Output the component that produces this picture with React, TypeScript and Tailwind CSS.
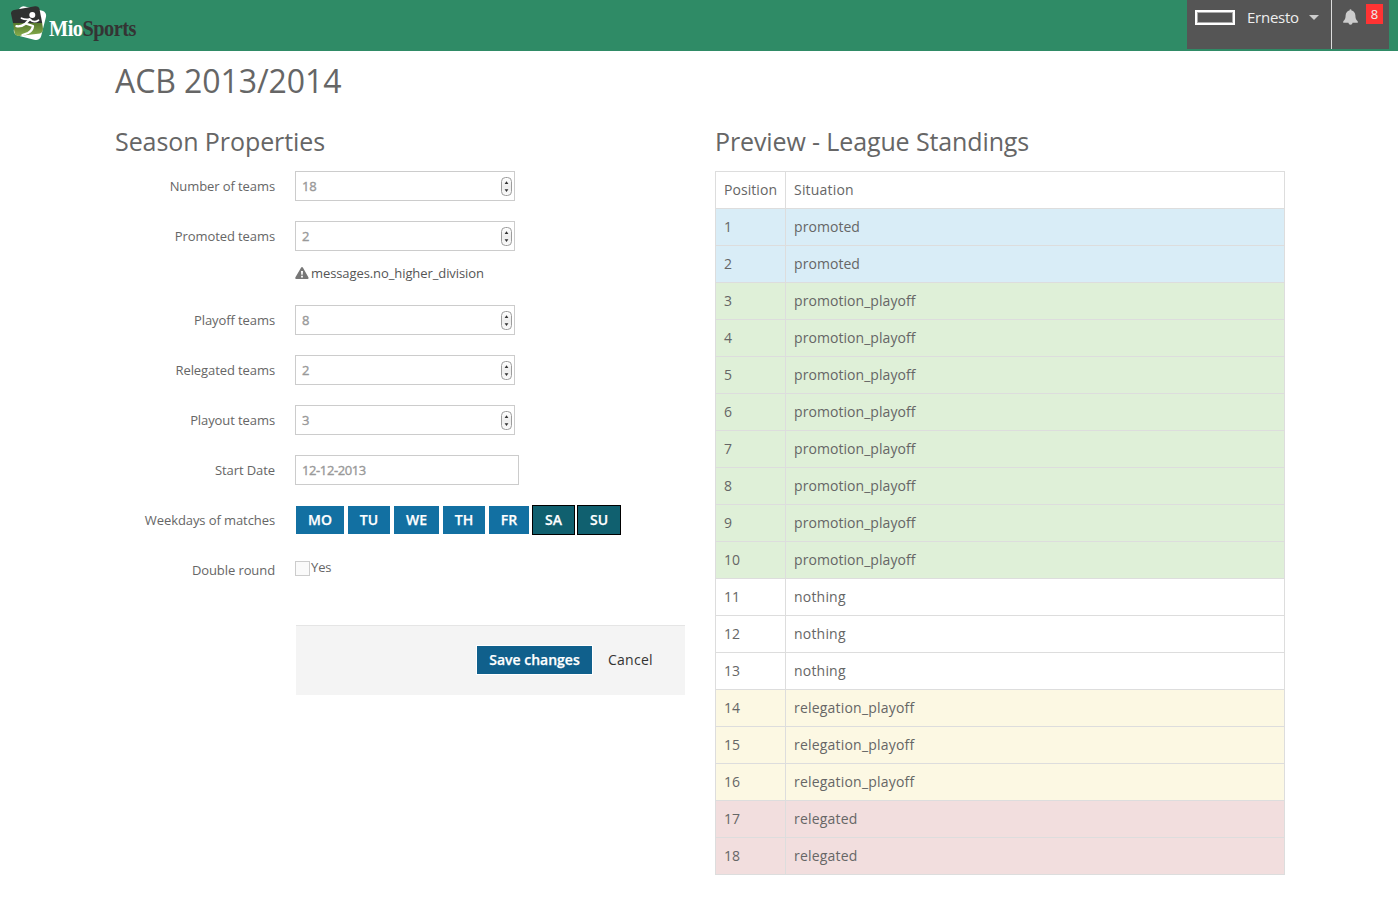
import React from "react";

const fields = [
  { label: "Number of teams", value: "18" },
  { label: "Promoted teams", value: "2", note: "messages.no_higher_division" },
  { label: "Playoff teams", value: "8" },
  { label: "Relegated teams", value: "2" },
  { label: "Playout teams", value: "3" },
];

const days = [
  { name: "MO", cls: "w-[50px] border-white bg-[#1270a2]" },
  { name: "TU", cls: "w-[44px] border-white bg-[#1270a2]" },
  { name: "WE", cls: "w-[47px] border-white bg-[#1270a2]" },
  { name: "TH", cls: "w-[44px] border-white bg-[#1270a2]" },
  { name: "FR", cls: "w-[42px] border-white bg-[#1270a2]" },
  { name: "SA", cls: "w-[43px] border-black bg-[#10606f]" },
  { name: "SU", cls: "w-[44px] border-black bg-[#10606f]" },
];

const situation = (n: number) => {
  if (n <= 2) return { text: "promoted", cls: "bg-[#d9edf7]" };
  if (n <= 10) return { text: "promotion_playoff", cls: "bg-[#dff0d8]" };
  if (n <= 13) return { text: "nothing", cls: "bg-white" };
  if (n <= 16) return { text: "relegation_playoff", cls: "bg-[#fcf8e3]" };
  return { text: "relegated", cls: "bg-[#f2dede]" };
};

function Stepper() {
  return (
    <svg width="13" height="21" viewBox="0 0 13 21" className="shrink-0">
      <defs>
        <linearGradient id="knob" x1="0" y1="0" x2="0" y2="1">
          <stop offset="0" stopColor="#fff" />
          <stop offset="0.5" stopColor="#eee" />
          <stop offset="1" stopColor="#fafafa" />
        </linearGradient>
      </defs>
      <rect x="1.5" y="1.5" width="10" height="18" rx="4" fill="url(#knob)" stroke="#9c9c9c" />
      <path d="M6.5 5.2 8.4 8H4.6ZM6.5 16 8.4 13.2H4.6Z" fill="#333" />
    </svg>
  );
}

function Row({ label, children }: { label: string; children: React.ReactNode }) {
  return (
    <div className="mb-5 flex">
      <div className="w-40 pt-[5px] text-right text-[13px] leading-5 tracking-[-0.09px]">{label}</div>
      <div className="ml-5">{children}</div>
    </div>
  );
}

function Logo() {
  return (
    <div className="flex h-[51px] items-start pl-[10px] pt-[5px]">
      <svg width="37" height="37" viewBox="0 0 37 37">
        <defs>
          <linearGradient id="turf" x1="0" y1="0" x2="0" y2="1">
            <stop offset="0" stopColor="#55782c" />
            <stop offset="1" stopColor="#86ac4c" />
          </linearGradient>
        </defs>
        <rect x="6" y="3.2" width="28" height="30" rx="5" fill="#fff" transform="rotate(14 20 18)" />
        <path d="M1 8.5Q1 5.5 4 4.9L25 1.2Q28.6.8 29.5 4L32.2 18H3Z" fill="#2f3130" />
        <path d="M3 18H32.2L33 24Q33 27.5 30 28.5L9 31Q5.2 31 4.6 28Z" fill="url(#turf)" />
        <circle cx="22.3" cy="10" r="3" fill="#fff" />
        <path d="M11.5 13.2Q15.5 15 19.5 14L22 16Q25 17.5 28.5 15.2" fill="none" stroke="#fff" strokeWidth="1.8" strokeLinecap="round" strokeLinejoin="round" />
        <path d="M19.5 14.5L15.5 18.5L23 21Q22.5 25.5 18 28L12.5 30M15 19Q11 22 6.5 21.2" fill="none" stroke="#fff" strokeWidth="2.3" strokeLinecap="round" strokeLinejoin="round" />
      </svg>
      <div className="ml-[2px] mt-[10px] origin-left scale-x-[0.885] whitespace-nowrap font-['Liberation_Serif',serif] text-[23px] font-bold leading-[28px] tracking-[-0.6px] text-[#343434]">
        <span className="text-white">Mio</span>Sports
      </div>
    </div>
  );
}

export default function App() {
  return (
    <div className="h-[899px] w-[1398px] overflow-hidden bg-white font-['Open_Sans',sans-serif] text-[#666]">
      <header className="flex h-[51px] items-start justify-between bg-[#2f8b66] pr-[9px]">
        <Logo />
        <div className="flex h-[49px] bg-[#555] text-[#eee]">
          <div className="flex w-[145px] items-start border-r border-[#ddd] pl-2">
            <div className="mt-[10px] h-[15px] w-10 border-2 border-white">
              <div className="h-full w-full border border-[#aaa]" />
            </div>
            <span className="ml-3 mt-[6px] w-[52px] text-[15px] leading-[22px] tracking-[-0.25px]">Ernesto</span>
            <svg width="10" height="5" viewBox="0 0 10 5" className="ml-[10px] mt-[15px]">
              <path d="M0 0H10L5 5Z" fill="#ccc" />
            </svg>
          </div>
          <div className="flex w-[57px] items-start pl-[11px]">
            <svg width="15" height="16" viewBox="0 0 15 16" className="mt-[9px]">
              <path d="M7.5.2Q8.5.2 8.5 1.5Q12 2.3 12.4 6.5C12.5 10 13.2 10.6 14.8 12.5V13.7H.2V12.5C1.8 10.6 2.5 10 2.6 6.5Q3 2.3 6.5 1.5Q6.5.2 7.5.2ZM5.4 13.7H9.6Q9.4 15.8 7.5 15.8Q5.6 15.8 5.4 13.7Z" fill="#ccc" />
            </svg>
            <span className="ml-2 mt-1 h-5 w-[17px] bg-[#f33] text-center text-[13px] leading-[21px]">8</span>
          </div>
        </div>
      </header>

      <main className="ml-[115px] w-[1170px]">
        <h1 className="pt-[10px] text-[32px] leading-10 tracking-[-0.08px]">ACB 2013/2014</h1>
        <div className="mt-5 flex">
          <section className="w-[600px]">
            <h2 className="h-[50px] text-[25px] leading-[40px] tracking-[-0.08px]">Season Properties</h2>
            {fields.map((f) => (
              <Row key={f.label} label={f.label}>
                <div className="flex h-[30px] w-[220px] items-center justify-between border border-[#ccc] bg-white pl-[6px] pr-[1px]">
                  <span className="text-[13px] leading-5 tracking-[-0.2px] text-[#999] [-webkit-text-stroke:0.35px_#999]">{f.value}</span>
                  <Stepper />
                </div>
                {f.note && (
                  <div className="flex h-[34px] items-start pt-[12px] text-[13px] leading-5 tracking-[-0.09px] text-[#555]">
                    <svg width="14" height="13" viewBox="0 0 14 13" className="mr-[2px] mt-[4px]">
                      <path fillRule="evenodd" d="M7 0Q7.6 0 8 .8L13.5 10.5Q13.8 12 12.6 12H1.2Q0 12 .3 10.5L6 .8Q6.4 0 7 0ZM6 4 6.3 7.8H7.7L8 4ZM6.1 8.8V10.5H7.9V8.8Z" fill="#777" />
                    </svg>
                    {f.note}
                  </div>
                )}
              </Row>
            ))}
            <Row label="Start Date">
              <div className="h-[30px] w-[224px] border border-[#ccc] pl-[6px] text-[13px] leading-[28px] tracking-[-0.4px] text-[#999] [-webkit-text-stroke:0.35px_#999]">12-12-2013</div>
            </Row>
            <Row label="Weekdays of matches">
              <div className="flex h-[30px] gap-[2px]">
                {days.map((d) => (
                  <button key={d.name} className={"h-[30px] border text-center text-[14px] font-semibold leading-[28px] text-white [-webkit-text-stroke:0.25px_#fff] " + d.cls}>
                    {d.name}
                  </button>
                ))}
              </div>
            </Row>
            <Row label="Double round">
              <div className="flex h-[30px] items-start text-[13px] leading-5 tracking-[-0.1px]">
                <span className="mt-[6px] h-[15px] w-[15px] border border-[#ccc] bg-[#fafafa]" />
                <span className="ml-px mt-[2px]">Yes</span>
              </div>
            </Row>
            <div className="ml-[181px] mt-[40px] flex h-[70px] w-[389px] items-start border-t border-[#e5e5e5] bg-[#f4f4f4] pl-[180px] pt-[19px]">
              <button className="h-[30px] w-[117px] border border-white bg-[#10608c] text-[14px] font-semibold leading-[28px] text-white [-webkit-text-stroke:0.25px_#fff]">Save changes</button>
              <span className="ml-[15px] text-[14px] leading-[30px] tracking-[0.25px] text-[#333]">Cancel</span>
            </div>
          </section>

          <section className="w-[570px]">
            <h2 className="h-[50px] text-[25px] leading-[40px] tracking-[-0.12px]">Preview - League Standings</h2>
            <table className="w-[570px] table-fixed border-separate border-spacing-0 border-b border-r border-[#ddd] text-[14px] leading-5 tracking-[0.06px]">
              <colgroup>
                <col className="w-[70px]" />
                <col />
              </colgroup>
              <tbody>
                <tr className="h-[37px]">
                  <td className="border-l border-t border-[#ddd] px-2 py-0">Position</td>
                  <td className="border-l border-t border-[#ddd] px-2 py-0 tracking-[0.2px]">Situation</td>
                </tr>
                {Array.from({ length: 18 }, (_, i) => i + 1).map((n) => {
                  const s = situation(n);
                  return (
                    <tr key={n} className={"h-[37px] " + s.cls}>
                      <td className="border-l border-t border-[#ddd] px-2 py-0">{n}</td>
                      <td className={"border-l border-t border-[#ddd] px-2 py-0 " + (n > 10 ? "tracking-[0.2px]" : "")}>{s.text}</td>
                    </tr>
                  );
                })}
              </tbody>
            </table>
          </section>
        </div>
      </main>
    </div>
  );
}
